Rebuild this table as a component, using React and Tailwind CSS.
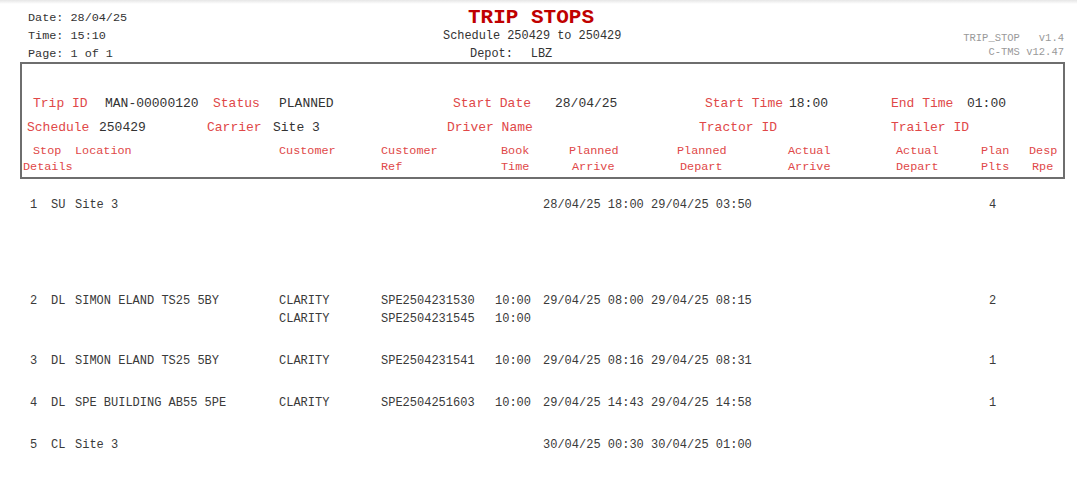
const RED = "text-[#e04848]";
const INK = "text-[#333]";

const stops = [
  {
    n: "1",
    t: "SU",
    loc: "Site 3",
    lines: [{ c: "", r: "", b: "" }],
    arr: "28/04/25 18:00",
    dep: "29/04/25 03:50",
    plts: "4",
    gap: "mb-[78px]",
  },
  {
    n: "2",
    t: "DL",
    loc: "SIMON ELAND TS25 5BY",
    lines: [
      { c: "CLARITY", r: "SPE2504231530", b: "10:00" },
      { c: "CLARITY", r: "SPE2504231545", b: "10:00" },
    ],
    arr: "29/04/25 08:00",
    dep: "29/04/25 08:15",
    plts: "2",
    gap: "mb-[24px]",
  },
  {
    n: "3",
    t: "DL",
    loc: "SIMON ELAND TS25 5BY",
    lines: [{ c: "CLARITY", r: "SPE2504231541", b: "10:00" }],
    arr: "29/04/25 08:16",
    dep: "29/04/25 08:31",
    plts: "1",
    gap: "mb-[24px]",
  },
  {
    n: "4",
    t: "DL",
    loc: "SPE BUILDING AB55 5PE",
    lines: [{ c: "CLARITY", r: "SPE2504251603", b: "10:00" }],
    arr: "29/04/25 14:43",
    dep: "29/04/25 14:58",
    plts: "1",
    gap: "mb-[24px]",
  },
  {
    n: "5",
    t: "CL",
    loc: "Site 3",
    lines: [{ c: "", r: "", b: "" }],
    arr: "30/04/25 00:30",
    dep: "30/04/25 01:00",
    plts: "",
    gap: "mb-[24px]",
  },
];

function Stop({ s }) {
  return (
    <div className={s.gap}>
      {s.lines.map((l, i) => (
        <div key={i} className="flex pl-[30px] text-[12px] leading-[18px] whitespace-pre text-[#3a3a3a]">
          <span className="w-[21px] shrink-0">{i === 0 ? s.n : ""}</span>
          <span className="w-[24px] shrink-0">{i === 0 ? s.t : ""}</span>
          <span className="w-[204px] shrink-0">{i === 0 ? s.loc : ""}</span>
          <span className="w-[102px] shrink-0">{l.c}</span>
          <span className="w-[114px] shrink-0">{l.r}</span>
          <span className="w-[48px] shrink-0">{l.b}</span>
          <span className="w-[108px] shrink-0">{i === 0 ? s.arr : ""}</span>
          <span className="w-[338px] shrink-0">{i === 0 ? s.dep : ""}</span>
          <span>{i === 0 ? s.plts : ""}</span>
        </div>
      ))}
    </div>
  );
}

export default function App() {
  return (
    <div className="w-[1077px] h-[485px] overflow-hidden bg-white font-['Liberation_Mono','Courier_New',monospace]">
      <div className="h-[4px] bg-gradient-to-b from-[#e6e6e6] to-white" />

      {/* report header */}
      <div className="flex h-[58px]">
        <div className="w-[443px] shrink-0 pl-[28px] pt-[5px] text-[11.8px] leading-[18px] text-[#333]">
          <div>Date: 28/04/25</div>
          <div>Time: 15:10</div>
          <div>Page: 1 of 1</div>
        </div>
        <div className="w-[300px] shrink-0 pt-[5px] leading-[18px] whitespace-pre text-[#333]">
          <div className="ml-[25px] text-[21px] font-bold text-[#c00000]">TRIP STOPS</div>
          <div className="text-[11.9px]">Schedule 250429 to 250429</div>
          <div className="ml-[27px] flex text-[11.9px]">
            <span>Depot:</span>
            <span className="ml-[18px]">LBZ</span>
          </div>
        </div>
        <div className="flex-1 pr-[13px] pt-[27px] text-right text-[10.5px] leading-[14px] whitespace-pre text-[#999]">
          <div>TRIP_STOP   v1.4</div>
          <div>C-TMS v12.47</div>
        </div>
      </div>

      {/* trip box */}
      <div className="ml-[20px] w-[1045px] border-2 border-[#6e6e6e] pt-[28px] pb-[2px] whitespace-pre">
        <div className="flex pl-[11px] text-[13px] leading-[24px]">
          <span className={`w-[72px] shrink-0 ${RED}`}>Trip ID</span>
          <span className={`w-[108px] shrink-0 ${INK}`}>MAN-00000120</span>
          <span className={`w-[66px] shrink-0 ${RED}`}>Status</span>
          <span className={`w-[174px] shrink-0 ${INK}`}>PLANNED</span>
          <span className={`w-[102px] shrink-0 ${RED}`}>Start Date</span>
          <span className={`w-[150px] shrink-0 ${INK}`}>28/04/25</span>
          <span className={`w-[84px] shrink-0 ${RED}`}>Start Time</span>
          <span className={`w-[102px] shrink-0 ${INK}`}>18:00</span>
          <span className={`w-[76px] shrink-0 ${RED}`}>End Time</span>
          <span className={INK}>01:00</span>
        </div>
        <div className="flex pl-[5px] text-[13px] leading-[24px]">
          <span className={`w-[72px] shrink-0 ${RED}`}>Schedule</span>
          <span className={`w-[108px] shrink-0 ${INK}`}>250429</span>
          <span className={`w-[66px] shrink-0 ${RED}`}>Carrier</span>
          <span className={`w-[174px] shrink-0 ${INK}`}>Site 3</span>
          <span className={`w-[252px] shrink-0 ${RED}`}>Driver Name</span>
          <span className={`w-[192px] shrink-0 ${RED}`}>Tractor ID</span>
          <span className={RED}>Trailer ID</span>
        </div>
        <div className={`mt-[3px] flex pl-[11px] text-[11.8px] leading-[16px] ${RED}`}>
          <span className="w-[42px] shrink-0">Stop</span>
          <span className="w-[204px] shrink-0">Location</span>
          <span className="w-[102px] shrink-0">Customer</span>
          <span className="w-[120px] shrink-0">Customer</span>
          <span className="w-[68px] shrink-0">Book</span>
          <span className="w-[108px] shrink-0">Planned</span>
          <span className="w-[111px] shrink-0">Planned</span>
          <span className="w-[108px] shrink-0">Actual</span>
          <span className="w-[85px] shrink-0">Actual</span>
          <span className="w-[48px] shrink-0">Plan</span>
          <span>Desp</span>
        </div>
        <div className={`flex pl-[1px] text-[11.8px] leading-[16px] ${RED}`}>
          <span className="w-[358px] shrink-0">Details</span>
          <span className="w-[120px] shrink-0">Ref</span>
          <span className="w-[71px] shrink-0">Time</span>
          <span className="w-[108px] shrink-0">Arrive</span>
          <span className="w-[108px] shrink-0">Depart</span>
          <span className="w-[108px] shrink-0">Arrive</span>
          <span className="w-[85px] shrink-0">Depart</span>
          <span className="w-[51px] shrink-0">Plts</span>
          <span>Rpe</span>
        </div>
      </div>

      {/* stops */}
      <div className="mt-[17px]">
        {stops.map((s) => (
          <Stop key={s.n} s={s} />
        ))}
      </div>
    </div>
  );
}
